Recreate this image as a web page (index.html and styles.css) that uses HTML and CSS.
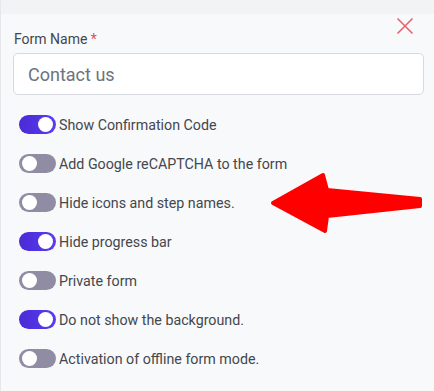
FILE: index.html
```html
<!DOCTYPE html>
<html>
<head>
<title>Form settings</title>
<link rel="stylesheet" href="styles.css">
</head>
<body>

<div class="panel">
  <div class="panel-top"></div>
  <div class="panel-body">
    <button class="close" type="button" aria-label="Close">
      <svg width="18" height="18" viewBox="0 0 18 18"><path d="M1.5 1.5L16.5 16.5M16.5 1.5L1.5 16.5" stroke="#e8636d" stroke-width="1.6" fill="none"/></svg>
    </button>

    <label class="field-label">Form Name <span class="req">*</span></label>
    <input class="field-input" type="text" placeholder="Contact us">

    <div class="options">
      <label class="option"><span class="switch on"><span class="knob"></span></span>Show Confirmation Code</label>
      <label class="option"><span class="switch"><span class="knob"></span></span>Add Google reCAPTCHA to the form</label>
      <label class="option"><span class="switch"><span class="knob"></span></span>Hide icons and step names.</label>
      <label class="option"><span class="switch on"><span class="knob"></span></span>Hide progress bar</label>
      <label class="option"><span class="switch"><span class="knob"></span></span>Private form</label>
      <label class="option"><span class="switch on"><span class="knob"></span></span>Do not show the background.</label>
      <label class="option"><span class="switch"><span class="knob"></span></span>Activation of offline form mode.</label>
    </div>

    <svg class="arrow" width="170" height="70" viewBox="262 170 170 70">
      <polygon points="273,203 323,175 327,190 420,199 420,206 327,216 325,231" fill="#ff0000" stroke="#ff0000" stroke-width="4" stroke-linejoin="round"/>
    </svg>
  </div>
</div>

</body>
</html>
```

FILE: styles.css
```css
body {
  margin: 0;
  padding: 0;
  font-family: Roboto, "Liberation Sans", Arial, sans-serif;
  background-color: #f8f9fa;
}

.panel {
  width: 434px;
  height: 391px;
  border-left: 1px solid #e6e7ea;
  box-sizing: border-box;
  overflow: hidden;
}

.panel-top {
  height: 14px;
  background-color: #f2f3f5;
}

.panel-body {
  position: relative;
  padding: 16px 10px 0 12px;
}

.close {
  position: absolute;
  top: 3px;
  right: 20px;
  width: 18px;
  height: 18px;
  padding: 0;
  border: none;
  background: none;
  cursor: pointer;
}

.field-label {
  display: block;
  font-size: 14px;
  color: #44474d;
  line-height: 18px;
  margin-left: 1px;
}

.req {
  color: #e2515b;
}

.field-input {
  display: block;
  box-sizing: border-box;
  width: 411px;
  height: 42px;
  margin-top: 5px;
  padding: 0 14px;
  border: 1px solid #d6d9df;
  border-radius: 5px;
  background-color: #fff;
  font-family: inherit;
  font-size: 18px;
}

.field-input::placeholder {
  color: #6c7480;
}

.options {
  margin-top: 10px;
  padding-left: 6px;
}

.option {
  display: flex;
  align-items: center;
  height: 39px;
  font-size: 14.25px;
  color: #44474d;
}

.switch {
  position: relative;
  width: 37px;
  height: 19px;
  border-radius: 10px;
  background-color: #908ca4;
  margin-right: 3px;
  flex-shrink: 0;
}

.switch.on {
  background: linear-gradient(90deg, #4b2ad6, #5a3df0);
}

.knob {
  position: absolute;
  top: 2px;
  left: 3px;
  width: 15px;
  height: 15px;
  border-radius: 50%;
  background-color: #fff;
}

.switch.on .knob {
  left: 19px;
}

.arrow {
  position: absolute;
  left: 261px;
  top: 156px;
}
```
